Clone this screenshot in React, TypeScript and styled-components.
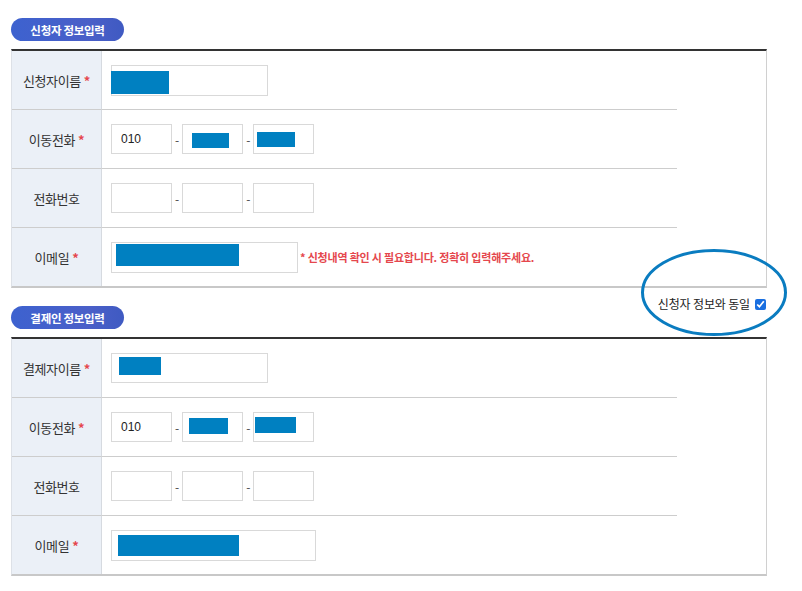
import React from "react";
import styled, { createGlobalStyle } from "styled-components";

const GlobalStyle = createGlobalStyle`
  body {
    margin: 0;
    background: #fff;
    font-family: "Noto Sans CJK KR", "Noto Sans", sans-serif;
    color: #333;
  }
`;

const Page = styled.div`
  position: relative;
  width: 756px;
  padding: 18px 0 20px 11px;
`;

const SectionHead = styled.div<{ $first?: boolean }>`
  display: flex;
  justify-content: space-between;
  align-items: flex-start;
  margin-top: ${(p) => (p.$first ? "0" : "18px")};
`;

const Pill = styled.h2`
  margin: 0;
  width: 113px;
  height: 23px;
  border-radius: 12px;
  background: linear-gradient(to right, #3d62cf, #4a5fc8 70%, #3f5ac2);
  color: #fff;
  font-size: 11.5px;
  font-weight: 700;
  letter-spacing: -0.3px;
  display: flex;
  align-items: center;
  justify-content: center;
`;

const SameCheck = styled.label`
  display: flex;
  align-items: center;
  margin-top: -10px;
  font-size: 12px;
  letter-spacing: -0.15px;
  line-height: 16px;
  color: #222;

  input {
    width: 11px;
    height: 11px;
    margin: 0 1px 0 5px;
    accent-color: #1a6fe0;
  }
`;

const Table = styled.div`
  margin-top: 8px;
  border-top: 2px solid #333;
  border-left: 1px solid #dde1e7;
  border-right: 1px solid #d0d0d0;
  border-bottom: 2px solid #c8c8c8;
`;

const Row = styled.div<{ $last?: boolean }>`
  display: grid;
  grid-template-columns: 90px 575px 1fr;

  & > div:not(:last-child) {
    border-bottom: ${(p) => (p.$last ? "none" : "1px solid #cdcdcd")};
  }
`;

const Label = styled.div`
  min-height: 58px;
  background: #ebf0f7;
  border-right: 1px solid #d6dae0;
  display: flex;
  align-items: center;
  justify-content: center;
  font-size: 13px;
  letter-spacing: -0.4px;
  color: #333;
`;

const Star = styled.span`
  color: #e5474d;
  font-weight: 700;
  margin-left: 3px;
`;

const Value = styled.div`
  display: flex;
  align-items: center;
  padding-left: 9px;
`;

const Spacer = styled.div``;

const Field = styled.div<{ $w: number; $h: number }>`
  box-sizing: border-box;
  width: ${(p) => p.$w}px;
  height: ${(p) => p.$h}px;
  border: 1px solid #d9d9d9;
  background: #fff;
  display: flex;
  align-items: center;
  font-size: 12px;
  color: #222;
`;

const FieldText = styled.span`
  padding-left: 9px;
  font-family: "Liberation Sans", Arial, sans-serif;
`;

const Redact = styled.span<{ $x: number; $y: number; $w: number; $h: number }>`
  align-self: flex-start;
  margin-left: ${(p) => p.$x}px;
  margin-top: ${(p) => p.$y}px;
  width: ${(p) => p.$w}px;
  height: ${(p) => p.$h}px;
  background: #0080c1;
`;

const Dash = styled.span`
  margin: 0 3px;
  font-size: 12px;
  color: #444;
`;

const Note = styled.span`
  margin-left: 2px;
  font-size: 11px;
  font-weight: 700;
  letter-spacing: -0.2px;
  color: #e5474d;
`;

const Mark = styled.svg`
  position: absolute;
  left: 641px;
  top: 249px;
  overflow: visible;
`;

type Box = [number, number, number, number];

type Section = {
  title: string;
  nameLabel: string;
  name: Box;
  nameH: number;
  phone: [Box, Box];
  email: Box;
  emailW: number;
  note?: string;
  check?: boolean;
};

const sections: Section[] = [
  {
    title: "신청자 정보입력",
    nameLabel: "신청자이름",
    name: [-1, 5, 58, 23],
    nameH: 31,
    phone: [
      [9, 8, 37, 15],
      [3, 7, 38, 15],
    ],
    email: [4, 1, 123, 22],
    emailW: 187,
    note: "* 신청내역 확인 시 필요합니다. 정확히 입력해주세요.",
  },
  {
    title: "결제인 정보입력",
    nameLabel: "결제자이름",
    name: [7, 3, 42, 18],
    nameH: 30,
    phone: [
      [6, 5, 39, 16],
      [1, 4, 41, 16],
    ],
    email: [6, 4, 121, 21],
    emailW: 205,
    check: true,
  },
];

const Mask = ({ b }: { b: Box }) => (
  <Redact $x={b[0]} $y={b[1]} $w={b[2]} $h={b[3]} />
);

const PhoneGroup = ({ masks }: { masks?: [Box, Box] }) => (
  <>
    <Field $w={61} $h={30}>{masks && <FieldText>010</FieldText>}</Field>
    <Dash>-</Dash>
    <Field $w={61} $h={30}>{masks && <Mask b={masks[0]} />}</Field>
    <Dash>-</Dash>
    <Field $w={61} $h={30}>{masks && <Mask b={masks[1]} />}</Field>
  </>
);

const FormSection = ({ s, first }: { s: Section; first?: boolean }) => (
  <>
    <SectionHead $first={first}>
      <Pill>{s.title}</Pill>
      {s.check && (
        <SameCheck>
          신청자 정보와 동일
          <input type="checkbox" defaultChecked />
        </SameCheck>
      )}
    </SectionHead>
    <Table>
      <Row>
        <Label>
          {s.nameLabel}
          <Star>*</Star>
        </Label>
        <Value>
          <Field $w={157} $h={s.nameH}>
            <Mask b={s.name} />
          </Field>
        </Value>
        <Spacer />
      </Row>
      <Row>
        <Label>
          이동전화<Star>*</Star>
        </Label>
        <Value>
          <PhoneGroup masks={s.phone} />
        </Value>
        <Spacer />
      </Row>
      <Row>
        <Label>전화번호</Label>
        <Value>
          <PhoneGroup />
        </Value>
        <Spacer />
      </Row>
      <Row $last>
        <Label>
          이메일<Star>*</Star>
        </Label>
        <Value>
          <Field $w={s.emailW} $h={31}>
            <Mask b={s.email} />
          </Field>
          {s.note && <Note>{s.note}</Note>}
        </Value>
        <Spacer />
      </Row>
    </Table>
  </>
);

export default function App() {
  return (
    <Page>
      <GlobalStyle />
      {sections.map((s, i) => (
        <FormSection key={s.title} s={s} first={i === 0} />
      ))}
      <Mark width="146" height="87" viewBox="0 0 146 87">
        <ellipse cx="73" cy="43.5" rx="71.5" ry="42" fill="none" stroke="#0a7cc0" strokeWidth="3" />
      </Mark>
    </Page>
  );
}
